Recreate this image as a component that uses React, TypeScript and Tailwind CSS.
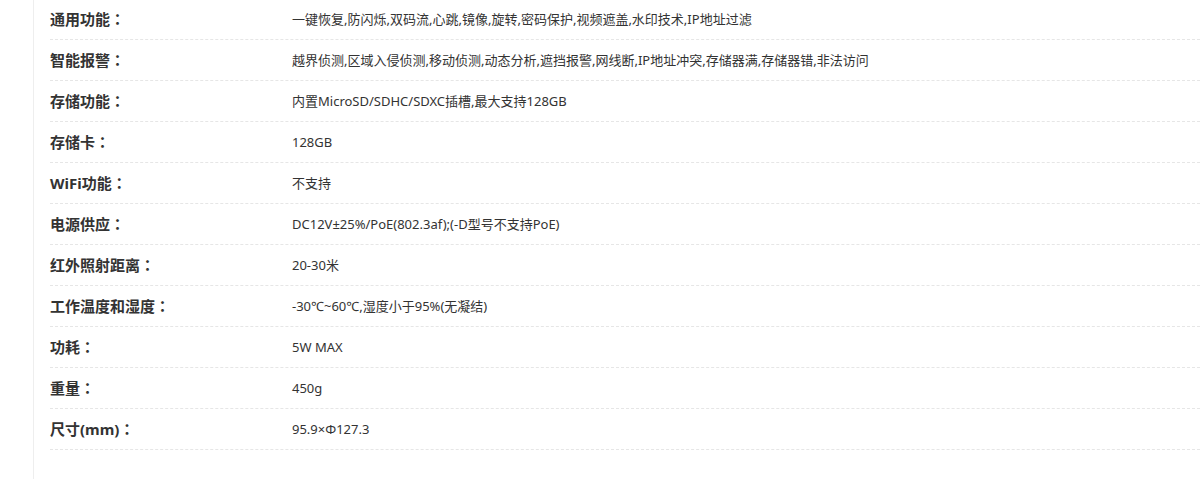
import React from 'react';

interface SpecRow {
  label: string;
  value: string;
}

const specs: SpecRow[] = [
  { label: '通用功能', value: '一键恢复,防闪烁,双码流,心跳,镜像,旋转,密码保护,视频遮盖,水印技术,IP地址过滤' },
  { label: '智能报警', value: '越界侦测,区域入侵侦测,移动侦测,动态分析,遮挡报警,网线断,IP地址冲突,存储器满,存储器错,非法访问' },
  { label: '存储功能', value: '内置MicroSD/SDHC/SDXC插槽,最大支持128GB' },
  { label: '存储卡', value: '128GB' },
  { label: 'WiFi功能', value: '不支持' },
  { label: '电源供应', value: 'DC12V±25%/PoE(802.3af);(-D型号不支持PoE)' },
  { label: '红外照射距离', value: '20-30米' },
  { label: '工作温度和湿度', value: '-30℃~60℃,湿度小于95%(无凝结)' },
  { label: '功耗', value: '5W MAX' },
  { label: '重量', value: '450g' },
  { label: '尺寸(mm)', value: '95.9×Φ127.3' },
];

export default function App() {
  return (
    <div
      className="w-[1200px] h-[480px] overflow-hidden bg-white text-[#333]"
      style={{ fontFamily: '"Noto Sans", "Noto Sans CJK SC", sans-serif' }}
    >
      <div className="ml-[33px] h-full border-l border-[#eeeeee] pl-4">
        {/* 参数列表 */}
        <div className="-mt-px">
          {specs.map((row) => (
            <div
              key={row.label}
              className="flex h-[41px] items-center border-b border-dashed border-[#e6e6e6]"
            >
              <div className="w-[242px] shrink-0 text-[15px] font-bold leading-none text-[#333]">
                {row.label}
                {/* 全角冒号居中 */}
                <span className="font-['Noto_Sans_CJK_TC',sans-serif]">：</span>
              </div>
              <div className="text-[13px] leading-none text-[#333]">{row.value}</div>
            </div>
          ))}
        </div>
      </div>
    </div>
  );
}
